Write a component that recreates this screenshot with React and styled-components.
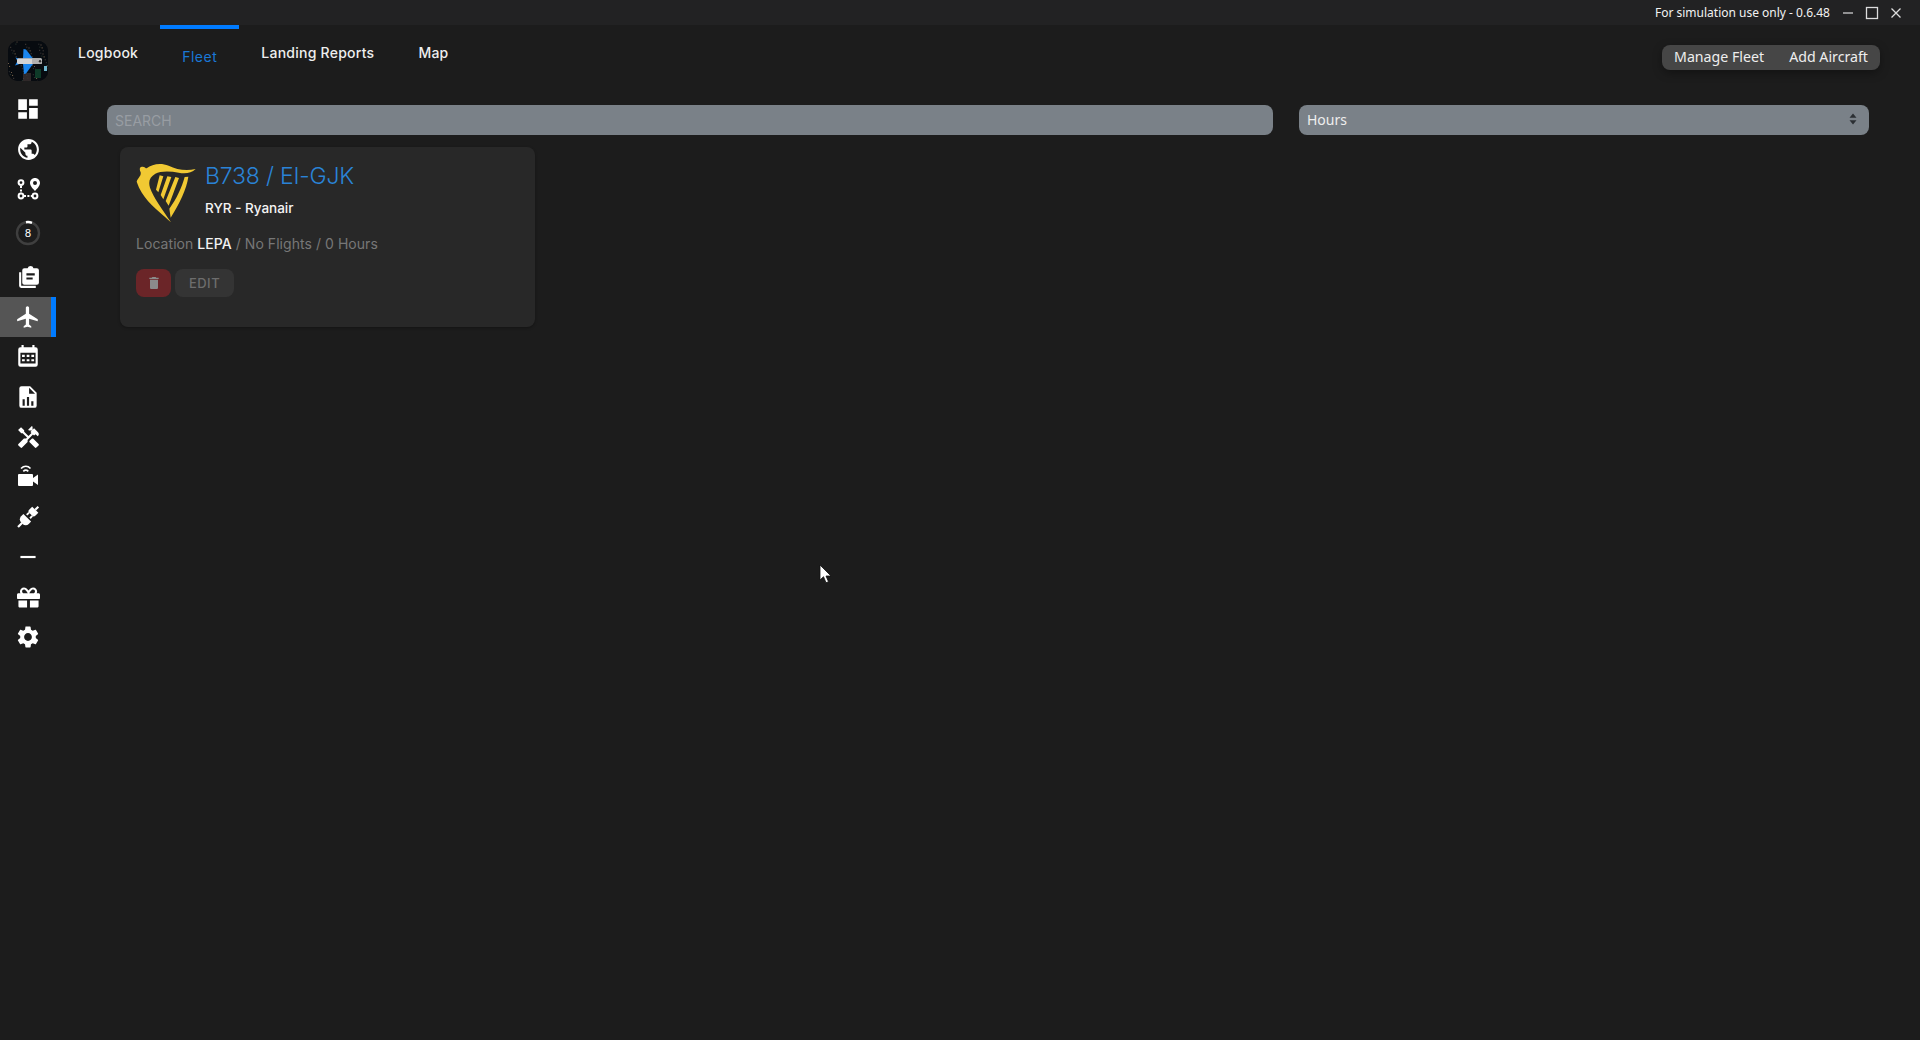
import React from "react";
import styled, { createGlobalStyle } from "styled-components";
import { MdDashboard, MdPublic, MdFlight, MdHandyman, MdRemove, MdSettings, MdDelete } from "react-icons/md";
import { FaGift } from "react-icons/fa";

const Global = createGlobalStyle`
  html, body { margin: 0; padding: 0; height: 100%; background: #1c1c1c; overflow: hidden; }
  * { box-sizing: border-box; }
`;
const MAIN = `Inter, "Open Sans", sans-serif`;
const UI = `"Noto Sans", "Open Sans", sans-serif`;

const Page = styled.div`
  position: relative; width: 1920px; height: 1040px; display: flex; flex-direction: column;
  background: #1c1c1c; color: #fff; font-family: ${MAIN}; overflow: hidden;
`;
const TitleBar = styled.header`
  height: 25px; flex: none; background: #222223; display: flex; align-items: center; justify-content: flex-end;
  padding-right: 12px; font: 400 12px ${UI}; color: #f2f2f2;
`;
const BuildLabel = styled.span`margin-right: 6px;`;
const WinButton = styled.span`width: 24px; height: 25px; display: flex; align-items: center; justify-content: center;`;
const Shell = styled.div`flex: 1; display: flex; min-height: 0;`;
const Sidebar = styled.nav`width: 56px; flex: none; display: flex; flex-direction: column; padding-top: 16px;`;
const LogoBox = styled.div`width: 40px; height: 40px; margin: 0 0 8px 8px; border-radius: 10px; overflow: hidden; background: #070b10;`;
const NavItem = styled.div`
  height: ${p => p.$h || 40}px; width: 56px; display: flex; align-items: center; justify-content: center;
  color: #fff; padding-left: 5px;
  background: ${p => p.$active ? "#555" : "transparent"};
  border-right: 5px solid ${p => p.$active ? "#007bff" : "transparent"};
`;
const Main = styled.main`flex: 1; display: flex; flex-direction: column; min-width: 0;`;
const Header = styled.div`height: 80px; flex: none; display: flex; justify-content: space-between; align-items: flex-start; padding: 0 40px 0 0;`;
const Tabs = styled.div`display: flex; align-items: flex-start;`;
const Tab = styled.div`
  padding: 18px 22px 0; line-height: 20px; font-size: 14px;
  letter-spacing: ${p => p.$active ? "0.5px" : "0.25px"};
  color: ${p => p.$active ? "#1a78d6" : "#eee"};
  font-weight: ${p => p.$active ? 400 : 500};
  border-top: ${p => p.$active ? "4px solid #007bff" : "0 none"};
`;
const ButtonGroup = styled.div`
  margin-top: 20px; height: 25px; display: flex; align-items: center; padding: 0 12px 2px; gap: 25px;
  background: #464646; border-radius: 8px; box-shadow: 0 3px 10px rgba(0,0,0,.35);
`;
const GroupButton = styled.span`font: 400 14.2px ${UI}; color: #eee; white-space: nowrap;`;
const Toolbar = styled.div`display: grid; grid-template-columns: 1166px 570px; gap: 26px; padding: 0 51px;`;
const Search = styled.div`
  height: 30px; border-radius: 8px; background: #7a8188; display: flex; align-items: center; padding: 0 8px;
  font-size: 14px; color: #989da3;
`;
const Select = styled.div`
  height: 30px; border-radius: 8px; background: #7a8188; display: flex; align-items: center; justify-content: space-between;
  padding: 0 12px 2px 8px; font: 400 14px ${UI}; color: #eee;
`;
const CardList = styled.div`padding: 12px 0 0 64px;`;
const Card = styled.article`
  width: 415px; height: 180px; background: #282828; border-radius: 8px; padding: 16px; box-shadow: 0 1px 3px rgba(0,0,0,.3);
`;
const CardHead = styled.div`display: flex; gap: 9px; height: 60px;`;
const Tail = styled.div`width: 60px; height: 60px; flex: none;`;
const CardTitle = styled.h3`margin: -1px 0 0; font-size: 23px; line-height: 28px; font-weight: 300; color: #2a83d6; letter-spacing: -0.2px;`;
const Operator = styled.div`margin-top: 8px; font-size: 13.5px; line-height: 20px; font-weight: 500; color: #f4f4f4;`;
const Stats = styled.div`margin-top: 11px; line-height: 20px; font-size: 14px; color: #777; letter-spacing: .05px;`;
const Strong = styled.span`color: #f2f2f2; font-weight: 500;`;
const Actions = styled.div`margin-top: 15px; display: flex; gap: 4px;`;
const DeleteButton = styled.span`width: 35px; height: 28px; border-radius: 8px; background: #6b2528; color: #8b8b8b; display: flex; align-items: center; justify-content: center; font-size: 16px;`;
const EditButton = styled.span`width: 59px; height: 28px; border-radius: 8px; background: #343434; color: #6d6d6d; display: flex; align-items: center; justify-content: center; font-size: 13px; font-weight: 500; letter-spacing: .5px;`;
const Cursor = styled.svg`position: absolute; left: 819px; top: 564px;`;

const Svg = ({ size = 24, box = "0 0 24 24", children }) => <svg width={size} height={size} viewBox={box} fill="currentColor">{children}</svg>;

const RouteIcon = () => (
  <Svg size={24}>
    <g fill="none" stroke="#fff" strokeWidth="2">
      <circle cx="5" cy="5.6" r="2.4" /><circle cx="5" cy="19" r="2.4" /><circle cx="19" cy="19" r="2.4" />
      <path d="M5 9v7M8 19h8" strokeDasharray="2 1.4" />
    </g>
    <path fillRule="evenodd" d="M19 1.5c-2.8 0-5 2.2-5 4.9 0 3 3.3 6 5 8.1 1.7-2.1 5-5.1 5-8.1 0-2.7-2.2-4.900-5-4.900zm0 3a2 2 0 1 1 0 4 2 2 0 0 1 0-4z" transform="translate(0 -.5)" />
  </Svg>
);
const RingIcon = () => (
  <svg width="26" height="26" viewBox="0 0 26 26">
    <circle cx="13" cy="13" r="11" fill="none" stroke="#3f3f3f" strokeWidth="2.4" />
    <path d="M11 2.2A11 11 0 0 1 17 2.800" fill="none" stroke="#fff" strokeWidth="2.400" />
    <text x="13" y="16.700" textAnchor="middle" fontSize="10.500" fontWeight="400" fill="#fff" fontFamily="Inter, sans-serif">8</text>
  </svg>
);
const ClipsIcon = () => (
  <Svg size={25}>
    <path d="M3 7v13a2 2 0 0 0 2 2h14v-2H5V7z" />
    <path fillRule="evenodd" d="M8 3h3.200a2.900 2.900 0 0 1 5.600 0H20a2 2 0 0 1 2 2v12a2 2 0 0 1-2 2H8a2 2 0 0 1-2-2V5a2 2 0 0 1 2-2zm2 5v2h8V8zm0 4v2h6v-2z" />
  </Svg>
);
const CalendarIcon = () => (
  <Svg size={26}>
    <path fillRule="evenodd" d="M6 1h2v2h8V1h2v2h1a2 2 0 0 1 2 2v14a2 2 0 0 1-2 2H5a2 2 0 0 1-2-2V5a2 2 0 0 1 2-2h1zM5 8v10h14V8z" />
    <path d="M6.500 10h2.500v2H6.500zm4.300 0h2.500v2h-2.500zm4.300 0h2.500v2h-2.500zM6.500 14h2.500v2H6.500zm4.300 0h2.500v2h-2.500zm4.300 0h2.500v2h-2.500z" />
  </Svg>
);
const FileChartIcon = () => (
  <Svg size={26}>
    <path fillRule="evenodd" d="M6 2h8l6 6v12a2 2 0 0 1-2 2H6a2 2 0 0 1-2-2V4a2 2 0 0 1 2-2zm7 7h5.500L13 3.500zM7 20h2v-6H7zm4 0h2v-8h-2zm4 0h2v-4h-2z" />
  </Svg>
);
const CameraIcon = () => (
  <Svg size={24} box="0 2 24 24">
    <path d="M3 11h13a1 1 0 0 1 1 1v3l5-3.500v10.500l-5-3.500v3.500a1 1 0 0 1-1 1H3a1 1 0 0 1-1-1V12a1 1 0 0 1 1-1z" />
    <path d="M5 5.500c3-2.800 6.800-2.800 9.500 0M7.300 8.300c1.600-1.500 3.400-1.500 5 0" fill="none" stroke="#fff" strokeWidth="1.700" />
  </Svg>
);
const PlugIcon = () => (
  <Svg size={26}>
    <g transform="rotate(45 12 12)">
      <rect x="11" y="-1.500" width="2" height="4" />
      <path d="M8 2.500h8v4a2 2 0 0 1-2 2h-4a2 2 0 0 1-2-2z" />
      <rect x="9" y="8.500" width="1.700" height="3" /><rect x="13.300" y="8.500" width="1.700" height="3" />
      <path d="M7 12.500h10v3a4 4 0 0 1-4 4h-2a4 4 0 0 1-4-4z" transform="translate(0 .5)" />
      <rect x="11" y="19.500" width="2" height="5.500" />
    </g>
  </Svg>
);
const SortArrows = () => (
  <svg width="8" height="12" viewBox="0 0 8 12" fill="#2b2f33"><path d="M4 0.500 7.500 4.800H.5zM4 11.500 .5 7.200h7z" /></svg>
);

const dots = Array.from({ length: 70 }, (_, i) => ({
  x: (i * 17.3 + (i * i) % 7) % 40,
  y: (i * 11.7 + (i * 3) % 5) % 40,
  c: ["#6d5a48", "#3b3a3a", "#8a7355", "#2c3a33", "#554a44"][i % 5],
}));
const LogoArt = () => (
  <svg width="40" height="40" viewBox="0 0 40 40">
    <rect width="40" height="40" fill="#070b10" />
    {dots.map((d, i) => <rect key={i} x={d.x} y={d.y} width="1" height="1" fill={d.c} />)}
    <rect x="15" y="32" width="8" height="8" fill="#3a3030" opacity=".8" />
    <rect x="27" y="28" width="6" height="9" fill="#0e3a28" />
    <rect x="36" y="25" width="3" height="5" fill="#6fb7cf" />
    <path d="M15 17.500 L15.500 8 L18 8.500 L25 17.500Z" fill="#1b86ee" />
    <path d="M15 23 L16 33 L18 32.500 L25 23Z" fill="#1b86ee" />
    <path d="M7 24.500 L9.500 20 L7.500 16.500 L10.500 17.500 L12 20 L10.500 23.500Z" fill="#1b86ee" />
    <rect x="9" y="17.300" width="25" height="5.800" rx="1.500" fill="#d4d4d4" />
    <rect x="24" y="17.300" width="10" height="5.800" rx="1.500" fill="#b0b0b0" />
    <circle cx="32" cy="20.200" r="1.200" fill="#333" />
  </svg>
);
const Harp = () => (
  <svg width="60" height="60" viewBox="78 68 180 180" fill="#f1c933">
    <path d="M80 124 C84 112 94 108 92 96 C88 88 88 80 96 79 C104 78 106 84 110 84 C126 72 150 66 176 76 C200 88 228 92 257 86 C244 98 226 102 206 97 C180 92 150 92 136 100 C120 110 114 122 120 142 C130 172 158 208 183 246 C176 240 168 232 158 224 C130 198 96 172 80 124Z" />
    <path d="M149 105 L160 108 L145 156 L138 148Z M172 108 L184 110 L160 177 L152 164Z M196 110 L207 113 L176 196 L167 182Z" />
    <path d="M224 110 L235 109 C230 146 208 190 182 232 L178 205 C200 175 216 140 224 110Z" />
  </svg>
);

const navItems = [
  { k: "dash", el: <MdDashboard size={26} /> },
  { k: "globe", el: <MdPublic size={25} /> },
  { k: "route", el: <RouteIcon /> },
  { k: "ring", el: <RingIcon />, h: 48 },
  { k: "clip", el: <ClipsIcon /> },
  { k: "plane", el: <MdFlight size={26} />, active: true },
  { k: "cal", el: <CalendarIcon /> },
  { k: "file", el: <FileChartIcon /> },
  { k: "tools", el: <MdHandyman size={25} /> },
  { k: "cam", el: <CameraIcon /> },
  { k: "plug", el: <PlugIcon /> },
  { k: "minus", el: <MdRemove size={26} /> },
  { k: "gift", el: <FaGift size={23} /> },
  { k: "gear", el: <MdSettings size={26} /> },
];

export default function App() {
  return (
    <Page>
      <Global />
      <TitleBar>
        <BuildLabel>For simulation use only - 0.6.48</BuildLabel>
        <WinButton><svg width="12" height="12" viewBox="0 0 12 12"><path d="M1 6h10" stroke="#ddd" strokeWidth="1.200" /></svg></WinButton>
        <WinButton><svg width="14" height="14" viewBox="0 0 14 14"><rect x="1.500" y="1.500" width="11" height="11" fill="none" stroke="#ddd" strokeWidth="1.300" /></svg></WinButton>
        <WinButton><svg width="12" height="12" viewBox="0 0 12 12"><path d="M1.500 1.500l9 9M10.500 1.500l-9 9" stroke="#ddd" strokeWidth="1.300" /></svg></WinButton>
      </TitleBar>
      <Shell>
        <Sidebar>
          <LogoBox><LogoArt /></LogoBox>
          {navItems.map(n => <NavItem key={n.k} $h={n.h} $active={n.active}>{n.el}</NavItem>)}
        </Sidebar>
        <Main>
          <Header>
            <Tabs>
              <Tab>Logbook</Tab>
              <Tab $active>Fleet</Tab>
              <Tab>Landing Reports</Tab>
              <Tab>Map</Tab>
            </Tabs>
            <ButtonGroup>
              <GroupButton>Manage Fleet</GroupButton>
              <GroupButton>Add Aircraft</GroupButton>
            </ButtonGroup>
          </Header>
          <Toolbar>
            <Search>SEARCH</Search>
            <Select>Hours<SortArrows /></Select>
          </Toolbar>
          <CardList>
            <Card>
              <CardHead>
                <Tail><Harp /></Tail>
                <div>
                  <CardTitle>B738 / EI-GJK</CardTitle>
                  <Operator>RYR - Ryanair</Operator>
                </div>
              </CardHead>
              <Stats>Location <Strong>LEPA</Strong> / No Flights / 0 Hours</Stats>
              <Actions>
                <DeleteButton><MdDelete /></DeleteButton>
                <EditButton>EDIT</EditButton>
              </Actions>
            </Card>
          </CardList>
        </Main>
      </Shell>
      <Cursor width="13" height="20" viewBox="0 0 13 20">
        <path d="M1 1v15l3.500-3.300 2.500 6 2.500-1-2.500-5.700H12z" fill="#fff" stroke="#111" strokeWidth=".8" />
      </Cursor>
    </Page>
  );
}
